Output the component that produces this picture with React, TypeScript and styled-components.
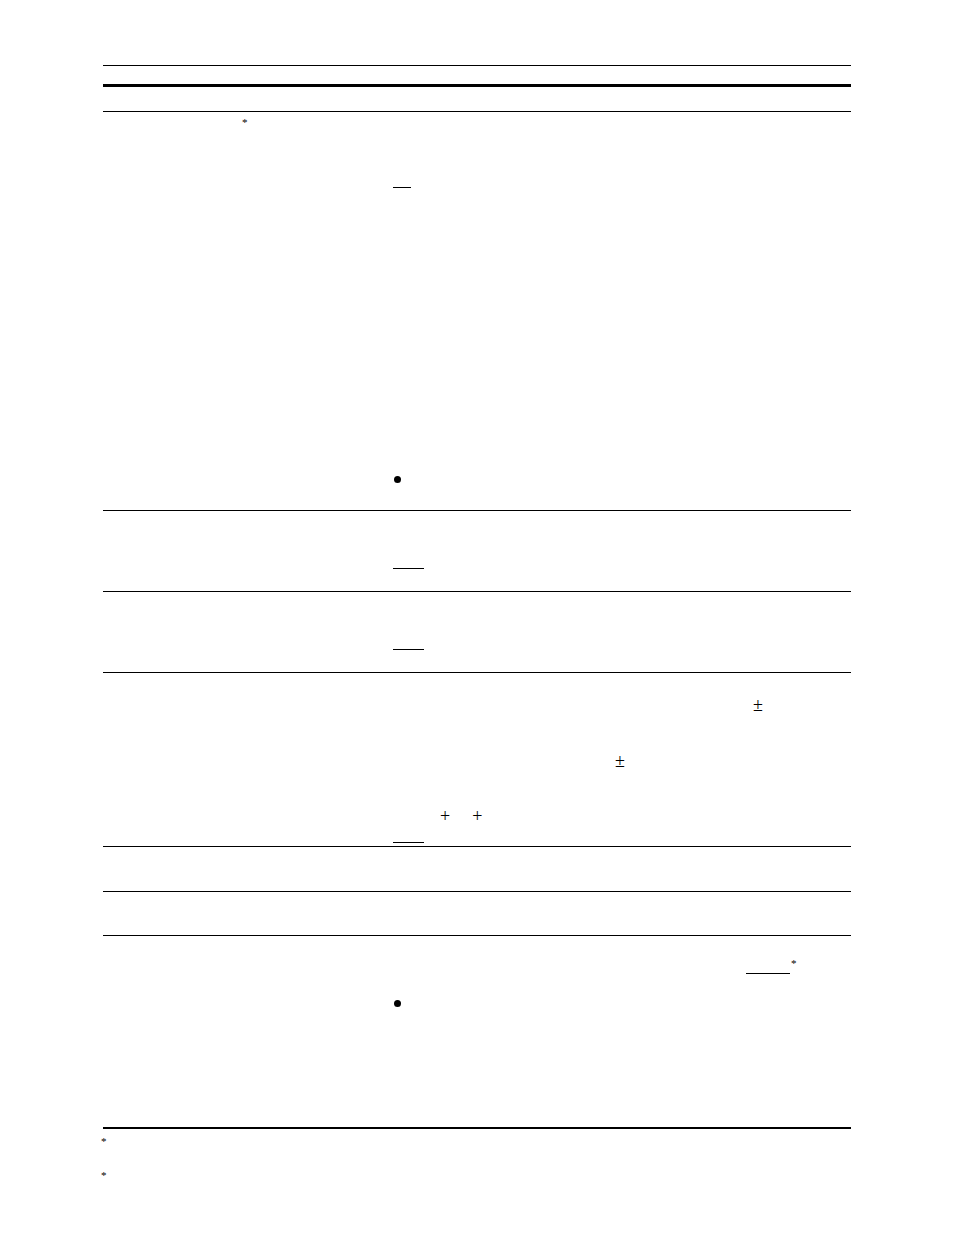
import styled, { createGlobalStyle } from "styled-components";

const GlobalStyle = createGlobalStyle`
  html, body {
    margin: 0;
    padding: 0;
    background: #ffffff;
  }

  body {
    font-family: "Liberation Serif", "Times New Roman", serif;
    color: #000000;
  }
`;

export const Page = styled.div`
  width: 748px;
  padding: 65px 0 0 103px;
  box-sizing: content-box;
`;

export const Rule = styled.div<{ $weight: number; $top?: number }>`
  height: ${(p) => p.$weight}px;
  margin-top: ${(p) => p.$top ?? 0}px;
  background: #000000;
`;

export const Row = styled.div<{ $height: number; $last?: boolean }>`
  display: grid;
  grid-template-columns: 290px 1fr;

  height: ${(p) => p.$height}px;
  border-bottom: ${(p) => (p.$last ? "none" : "1px solid #000000")};
`;

export const Cell = styled.div`
  display: flex;
  flex-direction: column;
  align-items: flex-start;
`;

export const Line = styled.div<{ $top?: number; $left?: number }>`
  display: flex;
  align-items: flex-start;

  margin-top: ${(p) => p.$top ?? 0}px;
  margin-left: ${(p) => p.$left ?? 0}px;
`;

export const Blank = styled.span<{ $width: number; $top?: number; $left?: number }>`
  display: block;
  width: ${(p) => p.$width}px;
  height: 0;
  margin-top: ${(p) => p.$top ?? 0}px;
  margin-left: ${(p) => p.$left ?? 0}px;
  border-bottom: 1px solid #000000;
`;

export const Symbol = styled.span<{ $left?: number }>`
  display: block;
  height: 18px;
  margin-left: ${(p) => p.$left ?? 0}px;

  font-size: 18px;
  line-height: 18px;
`;

export const Star = styled.span<{ $top?: number; $left?: number }>`
  display: block;
  height: 11px;
  margin-top: ${(p) => p.$top ?? 0}px;
  margin-left: ${(p) => p.$left ?? 0}px;

  font-size: 11px;
  line-height: 11px;
`;

export const Bullet = styled.span<{ $top: number }>`
  display: block;
  width: 7px;
  height: 7px;
  margin-top: ${(p) => p.$top}px;
  margin-left: 1px;

  border-radius: 50%;
  background: #000000;
`;

export const Notes = styled.div`
  display: flex;
  flex-direction: column;
  align-items: flex-start;
`;

export default function App() {
  return (
    <>
      <GlobalStyle />
      <Page>
        <Rule $weight={1} />
        <Rule $weight={3} $top={18} />

        <Row $height={24} />

        <Row $height={398}>
          <Cell>
            <Star $top={5} $left={139}>*</Star>
          </Cell>
          <Cell>
            <Blank $width={18} $top={75} />
            <Bullet $top={288} />
          </Cell>
        </Row>

        <Row $height={80}>
          <Cell />
          <Cell>
            <Blank $width={31} $top={57} />
          </Cell>
        </Row>

        <Row $height={80}>
          <Cell />
          <Cell>
            <Blank $width={31} $top={57} />
          </Cell>
        </Row>

        <Row $height={173}>
          <Cell />
          <Cell>
            <Line $top={23} $left={360}>
              <Symbol>±</Symbol>
            </Line>
            <Line $top={38} $left={222}>
              <Symbol>±</Symbol>
            </Line>
            <Line $top={37} $left={47}>
              <Symbol>+</Symbol>
              <Symbol $left={22}>+</Symbol>
            </Line>
            <Blank $width={31} $top={17} />
          </Cell>
        </Row>

        <Row $height={44} />
        <Row $height={43} />

        <Row $height={191} $last>
          <Cell />
          <Cell>
            <Line $top={22} $left={353}>
              <Blank $width={44} $top={15} />
              <Star $left={1}>*</Star>
            </Line>
            <Bullet $top={26} />
          </Cell>
        </Row>

        <Rule $weight={2} />

        <Notes>
          <Star $top={7} $left={-2}>*</Star>
          <Star $top={23} $left={-2}>*</Star>
        </Notes>
      </Page>
    </>
  );
}
